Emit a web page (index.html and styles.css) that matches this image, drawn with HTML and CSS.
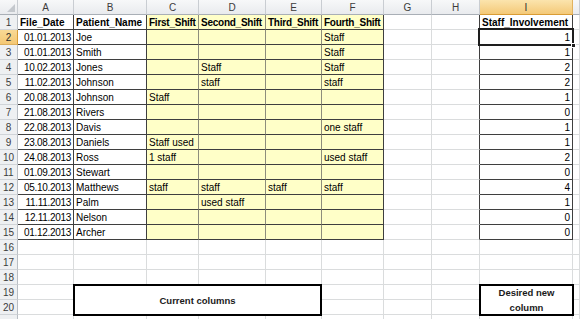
FILE: index.html
```html
<!DOCTYPE html>
<html>
<head>
<meta charset="utf-8">
<title>Sheet</title>
<link rel="stylesheet" href="styles.css">
</head>
<body>
<div class="sheet">
  <div class="row">
    <div class="c corner"></div>
    <div class="c ch">A</div>
    <div class="c ch">B</div>
    <div class="c ch">C</div>
    <div class="c ch">D</div>
    <div class="c ch">E</div>
    <div class="c ch">F</div>
    <div class="c ch">G</div>
    <div class="c ch">H</div>
    <div class="c ch hs">I</div>
    <div class="c ch"></div>
  </div>

  <div class="row">
    <div class="c rh">1</div>
    <div class="c d b">File_Date</div>
    <div class="c d b">Patient_Name</div>
    <div class="c d y b bn">First_Shift</div>
    <div class="c d y b bn">Second_Shift</div>
    <div class="c d y b bn">Third_Shift</div>
    <div class="c d y yl b bn">Fourth_Shift</div>
    <div class="c"></div>
    <div class="c dr"></div>
    <div class="c d b">Staff_Involvement</div>
    <div class="c"></div>
  </div>

  <div class="row">
    <div class="c rh rhs">2</div>
    <div class="c d n dt">01.01.2013</div>
    <div class="c d">Joe</div>
    <div class="c d y"></div>
    <div class="c d y"></div>
    <div class="c d y"></div>
    <div class="c d y yl">Staff</div>
    <div class="c"></div>
    <div class="c dr"></div>
    <div class="c d n">1</div>
    <div class="c"></div>
  </div>

  <div class="row">
    <div class="c rh">3</div>
    <div class="c d n dt">01.01.2013</div>
    <div class="c d">Smith</div>
    <div class="c d y"></div>
    <div class="c d y"></div>
    <div class="c d y"></div>
    <div class="c d y yl">Staff</div>
    <div class="c"></div>
    <div class="c dr"></div>
    <div class="c d n">1</div>
    <div class="c"></div>
  </div>

  <div class="row">
    <div class="c rh">4</div>
    <div class="c d n dt">10.02.2013</div>
    <div class="c d">Jones</div>
    <div class="c d y"></div>
    <div class="c d y">Staff</div>
    <div class="c d y"></div>
    <div class="c d y yl">Staff</div>
    <div class="c"></div>
    <div class="c dr"></div>
    <div class="c d n">2</div>
    <div class="c"></div>
  </div>

  <div class="row">
    <div class="c rh">5</div>
    <div class="c d n dt">11.02.2013</div>
    <div class="c d">Johnson</div>
    <div class="c d y"></div>
    <div class="c d y">staff</div>
    <div class="c d y"></div>
    <div class="c d y yl">staff</div>
    <div class="c"></div>
    <div class="c dr"></div>
    <div class="c d n">2</div>
    <div class="c"></div>
  </div>

  <div class="row">
    <div class="c rh">6</div>
    <div class="c d n dt">20.08.2013</div>
    <div class="c d">Johnson</div>
    <div class="c d y">Staff</div>
    <div class="c d y"></div>
    <div class="c d y"></div>
    <div class="c d y yl"></div>
    <div class="c"></div>
    <div class="c dr"></div>
    <div class="c d n">1</div>
    <div class="c"></div>
  </div>

  <div class="row">
    <div class="c rh">7</div>
    <div class="c d n dt">21.08.2013</div>
    <div class="c d">Rivers</div>
    <div class="c d y"></div>
    <div class="c d y"></div>
    <div class="c d y"></div>
    <div class="c d y yl"></div>
    <div class="c"></div>
    <div class="c dr"></div>
    <div class="c d n">0</div>
    <div class="c"></div>
  </div>

  <div class="row">
    <div class="c rh">8</div>
    <div class="c d n dt">22.08.2013</div>
    <div class="c d">Davis</div>
    <div class="c d y"></div>
    <div class="c d y"></div>
    <div class="c d y"></div>
    <div class="c d y yl">one staff</div>
    <div class="c"></div>
    <div class="c dr"></div>
    <div class="c d n">1</div>
    <div class="c"></div>
  </div>

  <div class="row">
    <div class="c rh">9</div>
    <div class="c d n dt">23.08.2013</div>
    <div class="c d">Daniels</div>
    <div class="c d y">Staff used</div>
    <div class="c d y"></div>
    <div class="c d y"></div>
    <div class="c d y yl"></div>
    <div class="c"></div>
    <div class="c dr"></div>
    <div class="c d n">1</div>
    <div class="c"></div>
  </div>

  <div class="row">
    <div class="c rh">10</div>
    <div class="c d n dt">24.08.2013</div>
    <div class="c d">Ross</div>
    <div class="c d y">1 staff</div>
    <div class="c d y"></div>
    <div class="c d y"></div>
    <div class="c d y yl">used staff</div>
    <div class="c"></div>
    <div class="c dr"></div>
    <div class="c d n">2</div>
    <div class="c"></div>
  </div>

  <div class="row">
    <div class="c rh">11</div>
    <div class="c d n dt">01.09.2013</div>
    <div class="c d">Stewart</div>
    <div class="c d y"></div>
    <div class="c d y"></div>
    <div class="c d y"></div>
    <div class="c d y yl"></div>
    <div class="c"></div>
    <div class="c dr"></div>
    <div class="c d n">0</div>
    <div class="c"></div>
  </div>

  <div class="row">
    <div class="c rh">12</div>
    <div class="c d n dt">05.10.2013</div>
    <div class="c d">Matthews</div>
    <div class="c d y">staff</div>
    <div class="c d y">staff</div>
    <div class="c d y">staff</div>
    <div class="c d y yl">staff</div>
    <div class="c"></div>
    <div class="c dr"></div>
    <div class="c d n">4</div>
    <div class="c"></div>
  </div>

  <div class="row">
    <div class="c rh">13</div>
    <div class="c d n dt">11.11.2013</div>
    <div class="c d">Palm</div>
    <div class="c d y"></div>
    <div class="c d y">used staff</div>
    <div class="c d y"></div>
    <div class="c d y yl"></div>
    <div class="c"></div>
    <div class="c dr"></div>
    <div class="c d n">1</div>
    <div class="c"></div>
  </div>

  <div class="row">
    <div class="c rh">14</div>
    <div class="c d n dt">12.11.2013</div>
    <div class="c d">Nelson</div>
    <div class="c d y"></div>
    <div class="c d y"></div>
    <div class="c d y"></div>
    <div class="c d y yl"></div>
    <div class="c"></div>
    <div class="c dr"></div>
    <div class="c d n">0</div>
    <div class="c"></div>
  </div>

  <div class="row">
    <div class="c rh">15</div>
    <div class="c d n dt">01.12.2013</div>
    <div class="c d">Archer</div>
    <div class="c d y"></div>
    <div class="c d y"></div>
    <div class="c d y"></div>
    <div class="c d y yl"></div>
    <div class="c"></div>
    <div class="c dr"></div>
    <div class="c d n">0</div>
    <div class="c"></div>
  </div>

  <div class="row">
    <div class="c rh">16</div>
    <div class="c"></div><div class="c"></div><div class="c"></div><div class="c"></div><div class="c"></div>
    <div class="c"></div><div class="c"></div><div class="c"></div><div class="c"></div><div class="c"></div>
  </div>
  <div class="row">
    <div class="c rh">17</div>
    <div class="c"></div><div class="c"></div><div class="c"></div><div class="c"></div><div class="c"></div>
    <div class="c"></div><div class="c"></div><div class="c"></div><div class="c"></div><div class="c"></div>
  </div>
  <div class="row">
    <div class="c rh">18</div>
    <div class="c"></div><div class="c"></div><div class="c"></div><div class="c"></div><div class="c"></div>
    <div class="c"></div><div class="c"></div><div class="c"></div><div class="c"></div><div class="c"></div>
  </div>
  <div class="row">
    <div class="c rh">19</div>
    <div class="c"></div><div class="c"></div><div class="c"></div><div class="c"></div><div class="c"></div>
    <div class="c"></div><div class="c"></div><div class="c"></div><div class="c"></div><div class="c"></div>
  </div>
  <div class="row">
    <div class="c rh">20</div>
    <div class="c"></div><div class="c"></div><div class="c"></div><div class="c"></div><div class="c"></div>
    <div class="c"></div><div class="c"></div><div class="c"></div><div class="c"></div><div class="c"></div>
  </div>
  <div class="row">
    <div class="c rh"></div>
    <div class="c"></div><div class="c"></div><div class="c"></div><div class="c"></div><div class="c"></div>
    <div class="c"></div><div class="c"></div><div class="c"></div><div class="c"></div><div class="c"></div>
  </div>

  <div class="selbox"><span class="handle"></span></div>
  <div class="tb tb-current">Current columns</div>
  <div class="tb tb-desired">Desired new column</div>
</div>
</body>
</html>
```

FILE: styles.css
```css
html, body {
  margin: 0;
  padding: 0;
  background: #ffffff;
}

body {
  font-family: "Liberation Sans", Arial, sans-serif;
  font-size: 10px;
  color: #000000;
}

.sheet {
  position: relative;
  width: 580px;
  height: 319px;
  overflow: hidden;
}

.row {
  display: grid;
  grid-template-columns: 18px 56px 73px 52px 67px 56px 62px 48px 48px 93px 1fr;
  height: 15px;
}

.c {
  box-sizing: border-box;
  height: 15px;
  border-right: 1px solid #dadcdd;
  border-bottom: 1px solid #dadcdd;
  padding: 1px 2px 0;
  line-height: 13px;
  white-space: nowrap;
  overflow: hidden;
}

/* headers */
.ch {
  background: linear-gradient(#f7f8f9, #e9ebee);
  border-right-color: #c9cdd2;
  border-bottom-color: #a9afb6;
  color: #3c3c3c;
  text-align: center;
  padding: 1px 0 0;
}

.corner {
  position: relative;
  background: linear-gradient(#f7f8f9, #e9ebee);
  border-right-color: #c9cdd2;
  border-bottom-color: #a9afb6;
}

.corner::after {
  content: "";
  position: absolute;
  right: 2px;
  bottom: 2px;
  width: 0;
  height: 0;
  border-left: 8px solid transparent;
  border-bottom: 8px solid #c4c8cd;
}

.hs {
  background: linear-gradient(#fbe4ad, #f4c978);
  border-right-color: #e2b25e;
  border-bottom-color: #d99c35;
  color: #2e2e2e;
}

.rh {
  background: #eef0f2;
  border-right-color: #b9bec4;
  border-bottom-color: #d0d4d8;
  color: #3c3c3c;
  text-align: center;
  padding: 1px 0 0;
}

.rhs {
  background: linear-gradient(#f9d995, #f4c874);
  border-bottom-color: #dcae5d;
  border-right-color: #d99c35;
  color: #2e2e2e;
}

/* bordered data cells */
.d {
  border-right-color: #3f3f3f;
  border-bottom-color: #3f3f3f;
}

.dr {
  border-right-color: #3f3f3f;
}

.y {
  background: #ffffc8;
  border-right-color: #8e8e7c;
}

.yl {
  border-right-color: #3f3f3f;
}

.b {
  font-weight: bold;
}

.bn {
  letter-spacing: -0.25px;
}

.n {
  text-align: right;
}

.dt {
  letter-spacing: -0.3px;
}

/* active cell */
.selbox {
  position: absolute;
  left: 478px;
  top: 28px;
  width: 96px;
  height: 18px;
  box-sizing: border-box;
  border: 2px solid #1e1e1e;
}

.handle {
  position: absolute;
  right: -4px;
  bottom: -4px;
  width: 5px;
  height: 5px;
  box-sizing: border-box;
  background: #1e1e1e;
  border: 1px solid #ffffff;
}

/* text boxes */
.tb {
  position: absolute;
  box-sizing: border-box;
  border: 2px solid #000000;
  background: #ffffff;
  font-weight: bold;
  font-size: 9.5px;
  line-height: 15px;
  color: #1a1a1a;
  display: flex;
  align-items: center;
  justify-content: center;
  text-align: center;
  padding: 0 4px;
}

.tb-current {
  left: 73px;
  top: 284px;
  width: 249px;
  height: 32px;
}

.tb-desired {
  left: 479px;
  top: 284px;
  width: 95px;
  height: 32px;
}
```
